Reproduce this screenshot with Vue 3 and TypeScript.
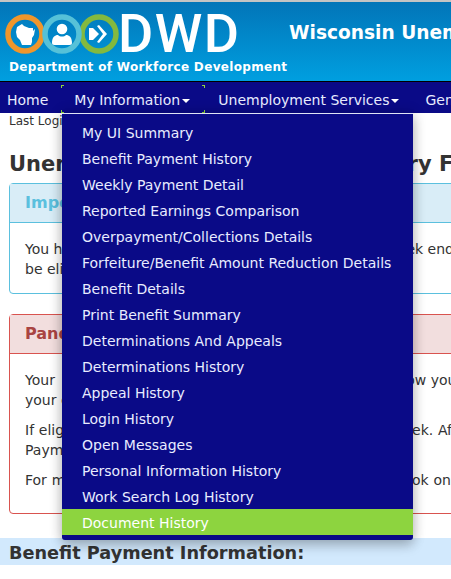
<script setup lang="ts">
const menu: string[] = [
  'My UI Summary',
  'Benefit Payment History',
  'Weekly Payment Detail',
  'Reported Earnings Comparison',
  'Overpayment/Collections Details',
  'Forfeiture/Benefit Amount Reduction Details',
  'Benefit Details',
  'Print Benefit Summary',
  'Determinations And Appeals',
  'Determinations History',
  'Appeal History',
  'Login History',
  'Open Messages',
  'Personal Information History',
  'Work Search Log History',
  'Document History',
]
</script>

<template>
  <div class="page">
    <header class="header">
      <div class="brand">
        <div class="logo">
          <svg class="rings" width="118" height="44" viewBox="0 0 118 44" aria-hidden="true">
            <circle cx="20" cy="22" r="17" fill="none" stroke="#f0962b" stroke-width="5.5" />
            <circle cx="94" cy="22" r="17" fill="none" stroke="#84b93f" stroke-width="5.5" />
            <circle cx="57" cy="22" r="17" fill="none" stroke="#56c1d8" stroke-width="5.5" />
            <path d="M12 15l5-3 2 2 5 2 4 0 0 3 2-2-1 6-2 3 0 4-1 3-9 0-2-5-3-3-1-5z" fill="#fff" />
            <circle cx="57" cy="17" r="5.3" fill="#fff" />
            <path d="M47 31c0-6 3-8 6-8 2 2 6 2 8 0 3 0 6 2 6 8 0 2-2 2-4 2H51c-2 0-4 0-4-2z" fill="#fff" />
            <path d="M84 16h4l6 6-6 6h-4l0-3 0-6z" fill="#fff" />
            <path d="M92 14l2-1 8 9-8 9-2-1 6-8z" fill="#fff" />
          </svg>
          <span class="dwd">DWD</span>
        </div>
        <div class="dept">Department of Workforce Development</div>
      </div>
      <div class="title">Wisconsin Unemployment Insurance</div>
    </header>

    <nav class="nav">
      <a class="nav-item home">Home</a>
      <a class="nav-item open">My Information<i class="caret"></i>
        <b class="tick tl"></b><b class="tick tr"></b><b class="tick bl"></b><b class="tick br"></b>
      </a>
      <a class="nav-item">Unemployment Services<i class="caret"></i></a>
      <a class="nav-item">General Information<i class="caret"></i></a>
      <ul class="dropdown">
        <li v-for="(m, i) in menu" :key="m" :class="{ active: i === menu.length - 1 }">{{ m }}</li>
      </ul>
    </nav>

    <main class="content">
      <div class="login">Last Login: 03/14/2022 09:12 AM</div>
      <h1>Unemployment Insurance Summary For Claimant</h1>

      <section class="panel info">
        <h2>Important Information About Your Claim</h2>
        <div class="body">
          <p>You have not filed a weekly claim for the last listed week ending, and you may not<br />be eligible for benefits.</p>
        </div>
      </section>

      <section class="panel danger">
        <h2>Pandemic Unemployment Assistance</h2>
        <div class="body">
          <p>Your&nbsp; claim is based on the information supplied and how you<br />your earnings were reported.</p>
          <p class="spaced">If eligible, you may continue to file your claim each week. After<br />Payment, benefits will be issued.</p>
          <p class="spaced">For more information, please see the Claimant Handbook on<span class="link">line</span></p>
        </div>
      </section>

      <div class="band">Benefit Payment Information:</div>
    </main>
  </div>
</template>

<style>
html, body { margin: 0; background: #fff; overflow: hidden; }
</style>

<style scoped>
.page {
  width: 451px;
  height: 579px;
  overflow: hidden;
  position: relative;
  font-family: "DejaVu Sans", sans-serif;
  font-size: 14px;
  color: #333;
  background: #fff;
}
.header {
  height: 79px;
  border-top: 2px solid #c4c4c4;
  border-bottom: 1px solid #000;
  background: linear-gradient(#0275b8, #009fe0);
  display: flex;
  color: #fff;
  white-space: nowrap;
}
.brand { margin-left: 5px; width: 284px; flex: none; }
.logo { display: flex; align-items: center; height: 44px; margin-top: 10px; }
.rings { flex: none; }
.dwd {
  font-family: Roboto, sans-serif;
  font-weight: 500;
  font-size: 54px;
  line-height: 44px;
  letter-spacing: 1.5px;
  margin-left: -5px;
}
.dept { font-weight: 700; font-size: 12px; margin: 4px 0 0 4px; letter-spacing: .33px; }
.title { font-weight: 700; font-size: 18.6px; margin-top: 20px; }
.nav {
  height: 31px;
  background: #0a0a87;
  display: flex;
  position: relative;
  white-space: nowrap;
  z-index: 2;
}
.nav-item {
  color: #e8ecff;
  line-height: 37px;
  height: 31px;
  padding: 0 13px;
  position: relative;
  flex: none;
}
.nav-item.home { padding: 0 13px 0 7px; }
.nav-item.open { width: 144px; box-sizing: border-box; }
.caret {
  display: inline-block;
  border: 4px solid transparent;
  border-top-color: #fff;
  border-bottom-width: 0;
  margin-left: 2px;
  vertical-align: 2px;
}
.tick { position: absolute; width: 2px; height: 2px; border: 0 solid #8dd63f; }
.tl { left: 0; top: 3px; border-width: 1px 0 0 1px; }
.tr { right: 0; top: 3px; border-width: 1px 1px 0 0; }
.bl { left: 0; bottom: 0; border-width: 0 0 1px 1px; }
.br { right: 0; bottom: 0; border-width: 0 1px 1px 0; }
.dropdown {
  position: absolute;
  left: 62px;
  top: 31px;
  width: 351px;
  margin: 0;
  padding: 5px 0;
  list-style: none;
  background: #0a0a87;
  border-top: 1px solid #dfe3f5;
  border-radius: 0 0 3px 3px;
  box-shadow: 0 6px 12px rgba(0, 0, 0, .18), 0 0 14px rgba(0, 0, 0, .2);
  box-sizing: border-box;
}
.dropdown li {
  height: 26px;
  line-height: 28px;
  padding-left: 20px;
  color: #e8ecff;
}
.dropdown li.active { background: #8dd43f; color: #fff; }
.content { padding-left: 9px; white-space: nowrap; }
.login { font-size: 12px; line-height: 16px; }
h1 {
  font-size: 21px;
  line-height: 26px;
  margin: 22px 0 6px;
  color: #333;
}
.panel {
  width: 700px;
  border: 1px solid;
  border-radius: 4px;
  box-sizing: border-box;
  margin-bottom: 20px;
}
.panel h2 {
  margin: 0;
  font-size: 16px;
  line-height: 38px;
  padding-left: 15px;
  border-bottom: 1px solid;
}
.info { border-color: #5bc0de; height: 111px; }
.info h2 { background: #d9edf7; color: #5bc0de; border-color: #5bc0de; }
.danger { border-color: #d9534f; height: 200px; margin-bottom: 24px; }
.danger h2 { background: #f2dede; color: #a94442; border-color: #d9534f; }
.body { padding: 16px 15px; line-height: 20px; }
.body p { margin: 0 0 10px; }
.body p.spaced { word-spacing: .3px; }
.link { color: #b5651d; }
.band {
  margin-left: -9px;
  height: 27px;
  line-height: 31px;
  padding-left: 9px;
  background: #d2e9fd;
  font-weight: 700;
  font-size: 17.7px;
}
</style>
